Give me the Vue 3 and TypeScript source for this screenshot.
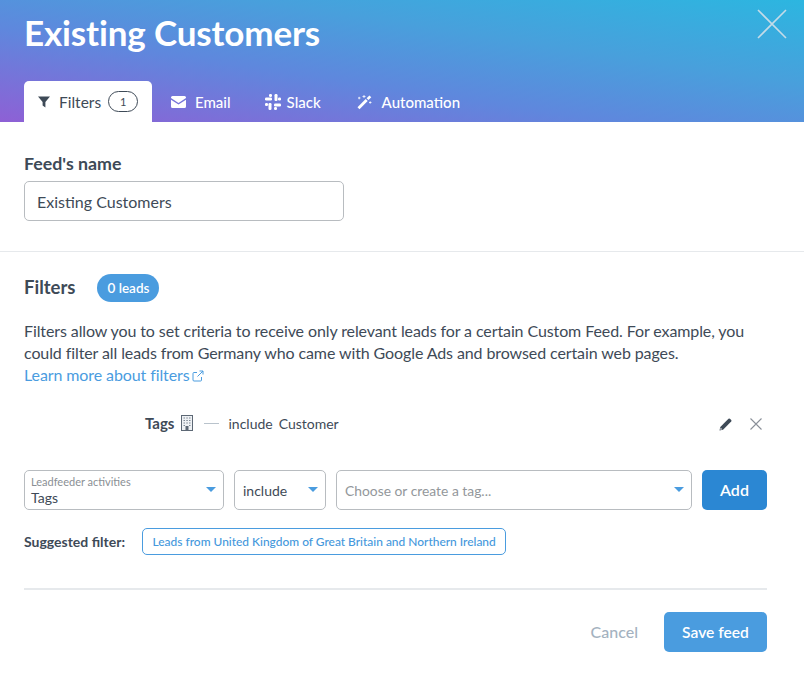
<script setup lang="ts">
const tabs = ['Email', 'Slack', 'Automation']
</script>

<template>
  <div class="modal">
    <header class="head">
      <h1 class="title">Existing Customers</h1>
      <button class="close" aria-label="Close">
        <svg width="30" height="30" viewBox="0 0 30 30"><path d="M1 1 29 29M29 1 1 29" stroke="#c4dbe8" stroke-width="1.6" fill="none" /></svg>
      </button>
      <nav class="tabs">
        <div class="tab active">
          <svg class="ic" width="12" height="12" viewBox="0 0 12 12"><path d="M0 .5h12L7.4 6v5.5L4.6 9.6V6z" fill="#3e4a57" /></svg>
          <span>Filters</span>
          <span class="count">1</span>
        </div>
        <div class="tab email">
          <svg width="15" height="12" viewBox="0 0 15 12"><path d="M1.500 0h12A1.500 1.500 0 0 1 15 1.500v.6L7.500 7 0 2.100v-.6A1.500 1.500 0 0 1 1.500 0zM0 3.800l7.500 4.800L15 3.800v6.700a1.500 1.500 0 0 1-1.500 1.500h-12A1.500 1.500 0 0 1 0 10.500z" fill="#fff" /></svg>
          <span>{{ tabs[0] }}</span>
        </div>
        <div class="tab slack">
          <svg width="16" height="16" viewBox="0 0 16 16" fill="#fff"><rect x="0" y="3.500" width="7" height="3" rx="1.200" /><rect x="4" y="0" width="3" height="3" rx="1.200" /><rect x="9.500" y="0" width="3" height="7" rx="1.200" /><rect x="13" y="3.500" width="3" height="3" rx="1.200" /><rect x="9" y="9.500" width="7" height="3" rx="1.200" /><rect x="9" y="13" width="3" height="3" rx="1.200" /><rect x="3.500" y="9" width="3" height="7" rx="1.200" /><rect x="0" y="9" width="3" height="3" rx="1.200" /></svg>
          <span>{{ tabs[1] }}</span>
        </div>
        <div class="tab auto">
          <svg width="15" height="16" viewBox="0 0 15 16"><path d="M.5 13.200 2.500 15.200 10.700 7 8.700 5zM9.600 4.200 11.500 6.100 14.300 3.300 12.400 1.400z" fill="#fff" /><path d="M5.500 2.500h3M7 1v3M1 4h2.500M2.200 2.800v2.500M12 8.500h2.500M13.200 7.300v2.400" stroke="#fff" stroke-width=".8" /></svg>
          <span>{{ tabs[2] }}</span>
        </div>
      </nav>
    </header>

    <section class="name-sec">
      <label class="name-label">Feed's name</label>
      <div class="name-input">Existing Customers</div>
    </section>

    <section class="filters">
      <div class="f-head">
        <h2>Filters</h2>
        <span class="pill">0 leads</span>
      </div>
      <p class="desc">
        Filters allow you to set criteria to receive only relevant leads for a certain Custom Feed. For example, you could filter all leads from Germany who came with Google Ads and browsed certain web pages.<br />
        <a class="link">Learn more about filters<svg width="12" height="12" viewBox="0 0 12 12" fill="none" stroke="#4a9cdf" stroke-width="1"><path d="M9.500 7v3a1 1 0 0 1-1 1h-6.500a1 1 0 0 1-1-1v-6.500a1 1 0 0 1 1-1h3M7.500 1h3.500v3.500M11 1 5.500 6.500" /></svg></a>
      </p>

      <div class="rule">
        <div class="rule-main">
          <strong>Tags</strong>
          <svg class="bld" width="12" height="16" viewBox="0 0 12 16"><rect x=".5" y=".5" width="11" height="15" fill="#eef1f4" stroke="#5d6875" /><path d="M2.500 3h1.500M5.300 3h1.500M8 3h1.500M2.500 5.500h1.500M5.300 5.500h1.500M8 5.500h1.500M2.500 8h1.500M5.300 8h1.500M8 8h1.500M2.500 10.500h1.500M8 10.500h1.500" stroke="#7d8894" stroke-width="1.200" /><rect x="4.500" y="11" width="3" height="4" fill="#5d6875" /></svg>
          <span class="dash"></span>
          <span class="rule-val">include</span>
          <span class="rule-val">Customer</span>
        </div>
        <div class="rule-actions">
          <svg width="13" height="13" viewBox="0 0 13 13"><path d="M0.500 12.500 1.300 9 9.500 .8a1 1 0 0 1 1.400 0l1.300 1.300a1 1 0 0 1 0 1.400L4 11.700z" fill="#3e4a57" /><path d="M1.300 11.700 1.700 9.800 3.200 11.300z" fill="#fff" /></svg>
          <svg width="12" height="12" viewBox="0 0 12 12"><path d="M.5.500 11.500 11.500M11.500.5.500 11.500" stroke="#8a9099" stroke-width="1.100" fill="none" /></svg>
        </div>
      </div>

      <div class="controls">
        <div class="sel sel-a">
          <div>
            <div class="mini">Leadfeeder activities</div>
            <div class="val">Tags</div>
          </div>
          <span class="caret"></span>
        </div>
        <div class="sel sel-b">
          <span class="val">include</span>
          <span class="caret"></span>
        </div>
        <div class="sel sel-c">
          <span class="ph">Choose or create a tag...</span>
          <span class="caret"></span>
        </div>
        <button class="add">Add</button>
      </div>

      <div class="suggest">
        <strong>Suggested filter:</strong>
        <span class="chip">Leads from United Kingdom of Great Britain and Northern Ireland</span>
      </div>

      <footer class="foot">
        <span class="cancel">Cancel</span>
        <button class="save">Save feed</button>
      </footer>
    </section>
  </div>
</template>

<style>
html, body { margin: 0; background: #fff; }
</style>

<style scoped>
.modal {
  width: 804px;
  height: 692px;
  overflow: hidden;
  font-family: Lato, sans-serif;
  color: #3e4a57;
  position: relative;
  background: #fff;
}
.head {
  height: 122px;
  box-sizing: border-box;
  padding: 12px 24px 0;
  display: flex;
  flex-direction: column;
  justify-content: space-between;
  background: linear-gradient(to top right, #8e60d5 0%, #5f87dd 38%, #48a0dc 66%, #2cb6e0 100%);
}
.title {
  margin: 0;
  font-size: 35px;
  line-height: 40px;
  font-weight: 700;
  letter-spacing: -0.15px;
  font-variant-ligatures: none;
  color: #fff;
}
.close {
  position: absolute;
  top: 9px;
  right: 17px;
  padding: 0;
  border: 0;
  background: none;
  line-height: 0;
}
.tabs {
  display: flex;
  align-items: stretch;
  height: 41px;
}
.tab {
  display: flex;
  align-items: center;
  font-size: 15px;
  font-weight: 500;
  color: #fff;
}
.tab.active {
  width: 128px;
  box-sizing: border-box;
  padding-left: 14px;
  background: #fff;
  color: #3e4a57;
  font-size: 15.500px;
  font-weight: 400;
  border-radius: 5px 5px 0 0;
}
.active .ic { margin-right: 9px; }
.count {
  width: 30px;
  height: 21px;
  box-sizing: border-box;
  margin-left: 7px;
  border: 1px solid #3e4a57;
  border-radius: 11px;
  font-size: 11px;
  line-height: 19px;
  text-align: center;
}
.email { margin-left: 19px; gap: 9px; }
.slack { margin-left: 34px; gap: 6px; }
.auto { margin-left: 36px; gap: 10px; }

.name-sec {
  height: 130px;
  box-sizing: border-box;
  padding: 30px 24px 0;
  border-bottom: 1px solid #e6e9ec;
}
.name-label {
  display: block;
  font-size: 17.800px;
  line-height: 22px;
  font-weight: 700;
}
.name-input {
  width: 320px;
  height: 40px;
  box-sizing: border-box;
  margin-top: 7px;
  padding-left: 12px;
  border: 1px solid #b8bcc0;
  border-radius: 5px;
  font-size: 16px;
  line-height: 39px;
}

.filters { padding: 22px 37px 0 24px; }
.f-head { display: flex; align-items: center; height: 28px; }
.f-head h2 {
  margin: 0 0 2px;
  font-size: 18.500px;
  line-height: 22px;
  font-weight: 700;
}
.pill {
  margin-left: 22px;
  width: 62px;
  height: 28px;
  border-radius: 14px;
  background: #4a9cdf;
  color: #fff;
  font-size: 13.500px;
  font-weight: 600;
  line-height: 28px;
  text-align: center;
}
.desc {
  margin: 18px 0 0;
  font-size: 16px;
  letter-spacing: -0.1px;
  line-height: 22px;
}
.link { color: #4a9cdf; }
.link svg { margin-left: 2px; vertical-align: -1px; }

.rule {
  display: flex;
  align-items: center;
  justify-content: space-between;
  height: 16px;
  margin-top: 30px;
  padding-left: 121px;
}
.rule-main { display: flex; align-items: center; font-size: 14px; margin-bottom: 2px; }
.rule-main strong { font-size: 15px; font-weight: 700; }
.bld { margin-left: 7px; }
.dash { width: 15px; height: 1px; margin: 0 9px 0 11px; background: #b9c3cc; }
.rule-val { margin-right: 6px; }
.rule-actions { display: flex; align-items: center; gap: 18px; margin-right: 5px; }

.controls { display: flex; gap: 10px; margin-top: 38px; }
.sel {
  height: 40px;
  box-sizing: border-box;
  display: flex;
  align-items: center;
  justify-content: space-between;
  border: 1px solid #b8bcc0;
  border-radius: 5px;
  padding: 0 7px 0 6px;
  background: #fff;
}
.sel-a { width: 200px; }
.sel-b { width: 92px; padding-left: 8px; }
.sel-c { width: 356px; padding-left: 8px; }
.mini { font-size: 11px; line-height: 12px; color: #8a8f94; margin-top: 1px; margin-bottom: 1px; }
.val { font-size: 14px; line-height: 17px; color: #3e4a57; }
.ph { font-size: 13.850px; color: #93979b; }
.caret {
  width: 0;
  height: 0;
  margin-top: -1px;
  border-left: 5px solid transparent;
  border-right: 5px solid transparent;
  border-top: 5px solid #4a9cdf;
}
.add {
  width: 65px;
  height: 40px;
  padding: 0 0 2px;
  border: 0;
  border-radius: 5px;
  background: #2b87d3;
  color: #fff;
  font: 600 16px Lato, sans-serif;
}
.suggest { display: flex; align-items: center; margin-top: 18px; }
.suggest strong { font-size: 14px; font-weight: 700; }
.chip {
  margin-left: 17px;
  height: 27px;
  box-sizing: border-box;
  padding: 0 9px 0 9.500px;
  border: 1px solid #4a9cdf;
  border-radius: 5px;
  color: #4598dc;
  font-size: 11.950px;
  font-weight: 500;
  line-height: 25px;
}
.foot {
  display: flex;
  justify-content: flex-end;
  align-items: center;
  margin-top: 33px;
  padding-top: 22px;
  border-top: 2px solid #e6e9ec;
}
.cancel { font-size: 16px; font-weight: 500; color: #a4b2c0; margin-right: 26px; margin-bottom: 2px; }
.save {
  width: 103px;
  height: 40px;
  padding: 0;
  border: 0;
  border-radius: 5px;
  background: #4a9cdf;
  color: #fff;
  font: 600 15.600px Lato, sans-serif;
}
</style>
